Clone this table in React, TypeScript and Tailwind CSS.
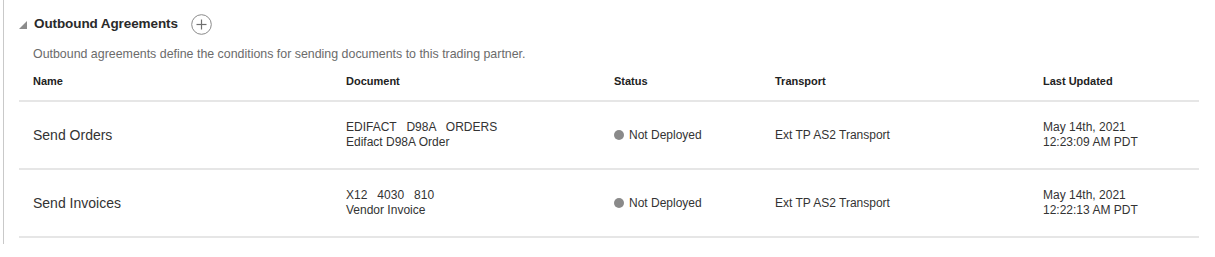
type Row = {
  name: string;
  doc: string;
  docName: string;
  status: string;
  transport: string;
  date: string;
  time: string;
};

const rows: Row[] = [
  {
    name: "Send Orders",
    doc: "EDIFACT   D98A   ORDERS",
    docName: "Edifact D98A Order",
    status: "Not Deployed",
    transport: "Ext TP AS2 Transport",
    date: "May 14th, 2021",
    time: "12:23:09 AM PDT",
  },
  {
    name: "Send Invoices",
    doc: "X12   4030   810",
    docName: "Vendor Invoice",
    status: "Not Deployed",
    transport: "Ext TP AS2 Transport",
    date: "May 14th, 2021",
    time: "12:22:13 AM PDT",
  },
];

const cols = "grid grid-cols-[313px_268px_161px_268px_1fr] pl-[14px]";

export default function App() {
  return (
    <div className="w-[1215px] h-[257px] bg-white font-['Liberation_Sans',Arial,sans-serif] text-[#333]">
      <div className="ml-[3px] border-l border-[#c9c9c9] pl-[15px] pr-4 pt-3 pb-[6px]">
        {/* section title */}
        <div className="flex items-center h-[22px] mt-[1px]">
          <svg width="8" height="8" viewBox="0 0 8 8" className="mt-[1px]">
            <polygon points="8,0 8,8 0,8" fill="#8c8c8c" />
          </svg>
          <h2 className="ml-[7px] text-[13.5px] font-bold text-[#2a2a2a] tracking-[-0.1px]">
            Outbound Agreements
          </h2>
          <button className="ml-[13px] flex items-center justify-center">
            <svg width="21" height="21" viewBox="0 0 21 21">
              <circle cx="10.5" cy="10.5" r="9.8" fill="none" stroke="#8a8a8a" strokeWidth="1" />
              <line x1="10.5" y1="5.5" x2="10.5" y2="15.5" stroke="#6f6f6f" strokeWidth="1.2" />
              <line x1="5.5" y1="10.5" x2="15.5" y2="10.5" stroke="#6f6f6f" strokeWidth="1.2" />
            </svg>
          </button>
        </div>

        <p className="mt-[11px] pl-[14px] text-[12.4px] leading-[17px] text-[#6b6b6b]">
          Outbound agreements define the conditions for sending documents to this trading partner.
        </p>

        {/* table */}
        <div>
          <div className={`${cols} h-[39px] items-center border-b-2 border-[#e6e6e6] text-[11px] font-bold text-[#222]`}>
            <div>Name</div>
            <div>Document</div>
            <div>Status</div>
            <div>Transport</div>
            <div>Last Updated</div>
          </div>
          {rows.map((r) => (
            <div
              key={r.name}
              className={`${cols} h-[68px] items-center border-b-2 border-[#e6e6e6] text-[12px] leading-[15px]`}
            >
              <div className="text-[14px]">{r.name}</div>
              <div>
                <div className="whitespace-pre">{r.doc}</div>
                <div>{r.docName}</div>
              </div>
              <div className="flex items-center gap-[5px]">
                <span className="w-[10px] h-[10px] rounded-full bg-[#8a8a8a]" />
                <span>{r.status}</span>
              </div>
              <div>{r.transport}</div>
              <div>
                <div>{r.date}</div>
                <div>{r.time}</div>
              </div>
            </div>
          ))}
        </div>
      </div>
    </div>
  );
}
